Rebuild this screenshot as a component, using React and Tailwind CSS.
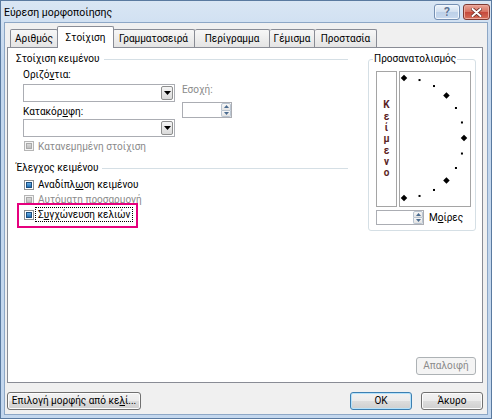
import React from "react";

const ANGLES = [90, 75, 60, 45, 30, 15, 0, -15, -30, -45, -60, -75, -90];

function Dial() {
  const cx = 4;
  const cy = 66;
  const r = 60;
  return (
    <svg width="70" height="134" viewBox="0 0 70 134" className="block">
      {ANGLES.map((a) => {
        const rad = (a * Math.PI) / 180;
        const x = cx + r * Math.cos(rad);
        const y = cy - r * Math.sin(rad);
        if (a % 45 === 0) {
          return (
            <rect
              key={a}
              x={x - 2.3}
              y={y - 2.3}
              width="4.6"
              height="4.6"
              transform={`rotate(45 ${x} ${y})`}
              fill="#000"
            />
          );
        }
        return <rect key={a} x={x - 1} y={y - 1} width="2" height="2" fill="#000" />;
      })}
    </svg>
  );
}

function DropButton() {
  return (
    <div className="w-[12px] h-[14px] border border-[#8e8f8f] rounded-[2px] bg-[linear-gradient(#f5f5f5,#dadada)] flex items-center justify-center">
      <svg width="7" height="4" viewBox="0 0 7 4">
        <path d="M0 0h7L3.5 4z" fill="#000" />
      </svg>
    </div>
  );
}

function Combo() {
  return (
    <div className="w-[152px] h-[18px] border border-[#abadb3] bg-white flex items-center justify-end pr-[1px]">
      <DropButton />
    </div>
  );
}

function SpinArrows() {
  return (
    <div className="w-[10px] flex flex-col">
      <div className="flex-1 flex items-center justify-center border border-[#b9c4d0] rounded-t-[2px] bg-[linear-gradient(#f8f8f8,#e3e3e3)]">
        <svg width="5" height="3" viewBox="0 0 5 3">
          <path d="M0 3h5L2.5 0z" fill="#4a6b8f" />
        </svg>
      </div>
      <div className="flex-1 flex items-center justify-center border border-t-0 border-[#b9c4d0] rounded-b-[2px] bg-[linear-gradient(#f8f8f8,#e3e3e3)]">
        <svg width="5" height="3" viewBox="0 0 5 3">
          <path d="M0 0h5L2.5 3z" fill="#4a6b8f" />
        </svg>
      </div>
    </div>
  );
}

function Check({ disabled }) {
  return (
    <span
      className={
        disabled
          ? "w-[10px] h-[10px] border border-[#b5b5b5] bg-[#f4f4f4] flex items-center justify-center shrink-0"
          : "w-[10px] h-[10px] border border-[#8e8f8f] bg-white flex items-center justify-center shrink-0"
      }
    >
      <span
        className={
          disabled
            ? "w-[6px] h-[6px] border border-[#a9a9a9] bg-[linear-gradient(#d9d9d9,#bdbdbd)]"
            : "w-[6px] h-[6px] border border-[#1d4f80] bg-[linear-gradient(#6cb0e6,#1f6db3)]"
        }
      />
    </span>
  );
}

function SectionHeader({ children }) {
  return (
    <div className="h-[14px] flex items-center">
      <span className="leading-[14px]">{children}</span>
      <span className="flex-1 ml-[4px] border-t border-[#d5dfe5]" />
    </div>
  );
}

const Tab = ({ label, width, active }) =>
  active ? (
    <div
      className={`${width} h-[22px] -mb-px relative z-10 border border-b-0 border-[#898c95] bg-white flex items-center justify-center rounded-t-[2px] -mx-[1px]`}
    >
      {label}
    </div>
  ) : (
    <div
      className={`${width} h-[18px] border border-b-0 border-l-0 first:border-l border-[#898c95] bg-[linear-gradient(#f7f7f7,#e4e4e4)] flex items-center justify-center rounded-t-[2px]`}
    >
      {label}
    </div>
  );

function WinButton({ children, primary, disabled, className }) {
  const base =
    "h-[18px] rounded-[3px] border flex items-center justify-center leading-none ";
  const look = disabled
    ? "border-[#adb2b5] bg-[#f4f4f4] text-[#8a8a8a]"
    : primary
    ? "border-[#3c7fb1] shadow-[inset_0_0_0_1px_#b5e2fb] bg-[linear-gradient(#f2f2f2_0%,#ebebeb_50%,#dddddd_50%,#cfcfcf_100%)]"
    : "border-[#707070] shadow-[inset_0_0_0_1px_#fcfcfc] bg-[linear-gradient(#f2f2f2_0%,#ebebeb_50%,#dddddd_50%,#cfcfcf_100%)]";
  return (
    <div className={base + look + " " + className}>
      <span className="whitespace-nowrap">{children}</span>
    </div>
  );
}

export default function App() {
  return (
    <div className="w-[492px] h-[419px] flex flex-col border border-[#5a7aa0] bg-[linear-gradient(#d9e6f4,#c3d7ee_60px,#c3d7ee)] font-['Roboto',sans-serif] text-[10px] text-black overflow-hidden select-none">
      {/* title bar */}
      <div className="h-[21px] flex items-start justify-between pl-[3px] pr-[1px]">
        <span className="mt-[5px] leading-[14px] text-[10.5px] text-black">Εύρεση μορφοποίησης</span>
        <div className="flex gap-[3px] mt-[3px]">
          <div className="w-[26px] h-[16px] rounded-[3px] border border-[#7590b3] bg-[linear-gradient(#eef4fb,#d1dfef_50%,#bcd0e8_50%,#c8d9ee)] shadow-[inset_0_0_0_1px_#f1f6fc] flex items-center justify-center">
            <span className="text-[12px] font-bold leading-none text-[#5d7495] [text-shadow:0_0_1px_#fff]">?</span>
          </div>
          <div className="w-[27px] h-[16px] rounded-[3px] border border-[#7e3b33] bg-[linear-gradient(#e9a597,#d7705f_50%,#c5473a_50%,#d56f59)] shadow-[inset_0_0_0_1px_#eea99c] flex items-center justify-center">
            <svg width="11" height="9" viewBox="0 0 11 9">
              <path d="M1.5 1l8 7M9.5 1l-8 7" stroke="#6b2b25" strokeWidth="3.6" strokeLinecap="round" />
              <path d="M1.5 1l8 7M9.5 1l-8 7" stroke="#fff" strokeWidth="2" strokeLinecap="round" />
            </svg>
          </div>
        </div>
      </div>

      {/* client area */}
      <div className="flex-1 mx-[3px] mb-[3px] border border-[#8da7c6] bg-[#f0f0f0] flex flex-col pt-[3px] pl-[2px] pr-[4px] pb-[4px]">
        {/* tabs */}
        <div className="flex items-end pl-[3px]">
          <Tab label="Αριθμός" width="w-[48px]" />
          <Tab label="Στοίχιση" width="w-[57px]" active />
          <Tab label="Γραμματοσειρά" width="w-[82px]" />
          <Tab label="Περίγραμμα" width="w-[75px]" />
          <Tab label="Γέμισμα" width="w-[45px]" />
          <Tab label="Προστασία" width="w-[62px]" />
        </div>

        {/* tab panel */}
        <div className="flex-1 border border-[#898c95] bg-white flex flex-col pl-[8px] pr-[6px] pt-[4px] pb-[7px]">
          <div className="flex gap-[20px]">
            {/* left column */}
            <div className="w-[332px] flex flex-col">
              <SectionHeader>Στοίχιση κειμένου</SectionHeader>
              <div className="flex pl-[7px]">
                <div className="w-[152px] flex flex-col">
                  <div className="mt-[2px] leading-[14px]">
                    Οριζό<u>ν</u>τια:
                  </div>
                  <div className="mt-[2px]">
                    <Combo />
                  </div>
                  <div className="mt-[3px] leading-[14px]">
                    Κατακόρ<u>υ</u>φη:
                  </div>
                  <div>
                    <Combo />
                  </div>
                </div>
                <div className="ml-[7px] flex flex-col">
                  <div className="mt-[17px] leading-[14px] text-[#8a8a8a]">Εσοχή:</div>
                  <div className="mt-[5px] w-[50px] h-[16px] border border-[#abadb3] bg-white flex justify-end">
                    <SpinArrows />
                  </div>
                </div>
              </div>
              <div className="mt-[2px] h-[14px] pl-[8px] flex items-center gap-[4px] text-[#8a8a8a]">
                <Check disabled />
                <span>Κατανεμημένη στοίχιση</span>
              </div>

              <div className="mt-[8px]">
                <SectionHeader>Έλεγχος κειμένου</SectionHeader>
              </div>
              <div className="mt-[2px] h-[15px] pl-[8px] flex items-center gap-[4px]">
                <Check />
                <span>
                  Αναδίπλ<u>ω</u>ση κειμένου
                </span>
              </div>
              <div className="h-[15px] pl-[8px] flex items-center gap-[4px] text-[#8a8a8a]">
                <Check disabled />
                <span>Αυτόματη προσαρμογή</span>
              </div>
              <div className="h-[15px] pl-[8px] flex items-center gap-[1px]">
                <div className="relative flex items-center gap-[1px]">
                  <Check />
                  <span className="border border-dotted border-black px-[2px] leading-[13px]">
                    Σ<u>υ</u>γχώνευση κελιών
                  </span>
                  <div className="absolute left-[-7px] top-[-4px] right-[-5px] bottom-[-6px] border-2 border-[#e6007e] pointer-events-none" />
                </div>
              </div>
            </div>

            {/* orientation */}
            <fieldset className="w-[108px] border border-[#d5dfe5] rounded-[3px] pl-[7px] pr-[4px] pb-[5px]">
              <legend className="-ml-[3px] px-[1px] leading-[14px]">Προσανατολισμός</legend>
              <div className="mt-[5px] flex gap-[2px]">
                <div className="w-[21px] h-[136px] border border-[#a5a5a5] flex flex-col items-center justify-center text-[#5c1f1f] font-bold">
                  {["Κ", "ε", "ί", "μ", "ε", "ν", "ο"].map((c, i) => (
                    <span key={i} className="h-[11.4px] leading-[11.4px] text-[10px]">
                      {c}
                    </span>
                  ))}
                </div>
                <div className="w-[72px] h-[136px] border border-[#a5a5a5]">
                  <Dial />
                </div>
              </div>
              <div className="mt-[3px] flex items-center">
                <div className="w-[48px] h-[15px] border border-[#abadb3] bg-white flex justify-end">
                  <SpinArrows />
                </div>
                <span className="ml-[5px]">
                  Μ<u>ο</u>ίρες
                </span>
              </div>
            </fieldset>
          </div>

          <div className="mt-auto flex justify-end">
            <WinButton disabled className="w-[60px]">
              Απαλοιφή
            </WinButton>
          </div>
        </div>

        {/* dialog buttons */}
        <div className="mt-[9px] flex items-center">
          <WinButton className="w-[134px]">
            Επιλογή μορφής από κε<u>λ</u>ί...
          </WinButton>
          <div className="flex-1" />
          <WinButton primary className="w-[62px]">
            OK
          </WinButton>
          <WinButton className="w-[62px] ml-[9px]">Άκυρο</WinButton>
        </div>
      </div>
    </div>
  );
}
